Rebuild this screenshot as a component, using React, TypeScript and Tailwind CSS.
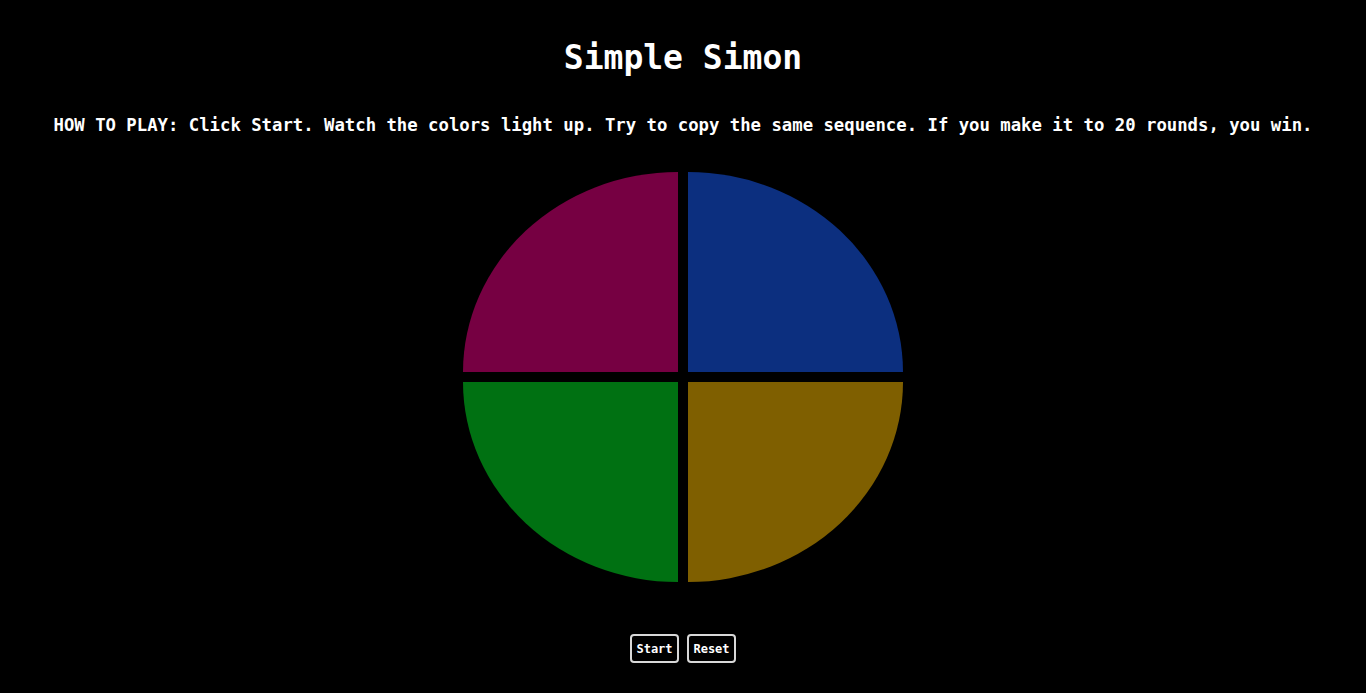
import React from "react";

export default function App() {
  return (
    <div className="min-h-[693px] w-full bg-black text-white flex flex-col items-center" style={{ fontFamily: '"DejaVu Sans Mono", "Liberation Mono", monospace' }}>
      <h1 className="mt-[37px] text-[33px] leading-[42px] font-bold">Simple Simon</h1>
      <p className="mt-[34px] text-[17.3px] leading-[24px] font-bold whitespace-nowrap">
        HOW TO PLAY: Click Start. Watch the colors light up. Try to copy the same sequence. If you make it to 20 rounds, you win.
      </p>
      <div className="mt-[35px] grid grid-cols-[215px_215px] grid-rows-[200px_200px] gap-[10px]">
        <div className="bg-[#760042] rounded-tl-[100%]" />
        <div className="bg-[#0c2f7f] rounded-tr-[100%]" />
        <div className="bg-[#007112] rounded-bl-[100%]" />
        <div className="bg-[#7f5f00] rounded-br-[100%]" />
      </div>
      <div className="mt-[52px] flex gap-[8px]">
        <button className="w-[49px] h-[29px] border-2 border-[#d8d8d8] rounded-[4px] bg-black text-white text-[12px] font-bold">Start</button>
        <button className="w-[49px] h-[29px] border-2 border-[#d8d8d8] rounded-[4px] bg-black text-white text-[12px] font-bold">Reset</button>
      </div>
    </div>
  );
}
